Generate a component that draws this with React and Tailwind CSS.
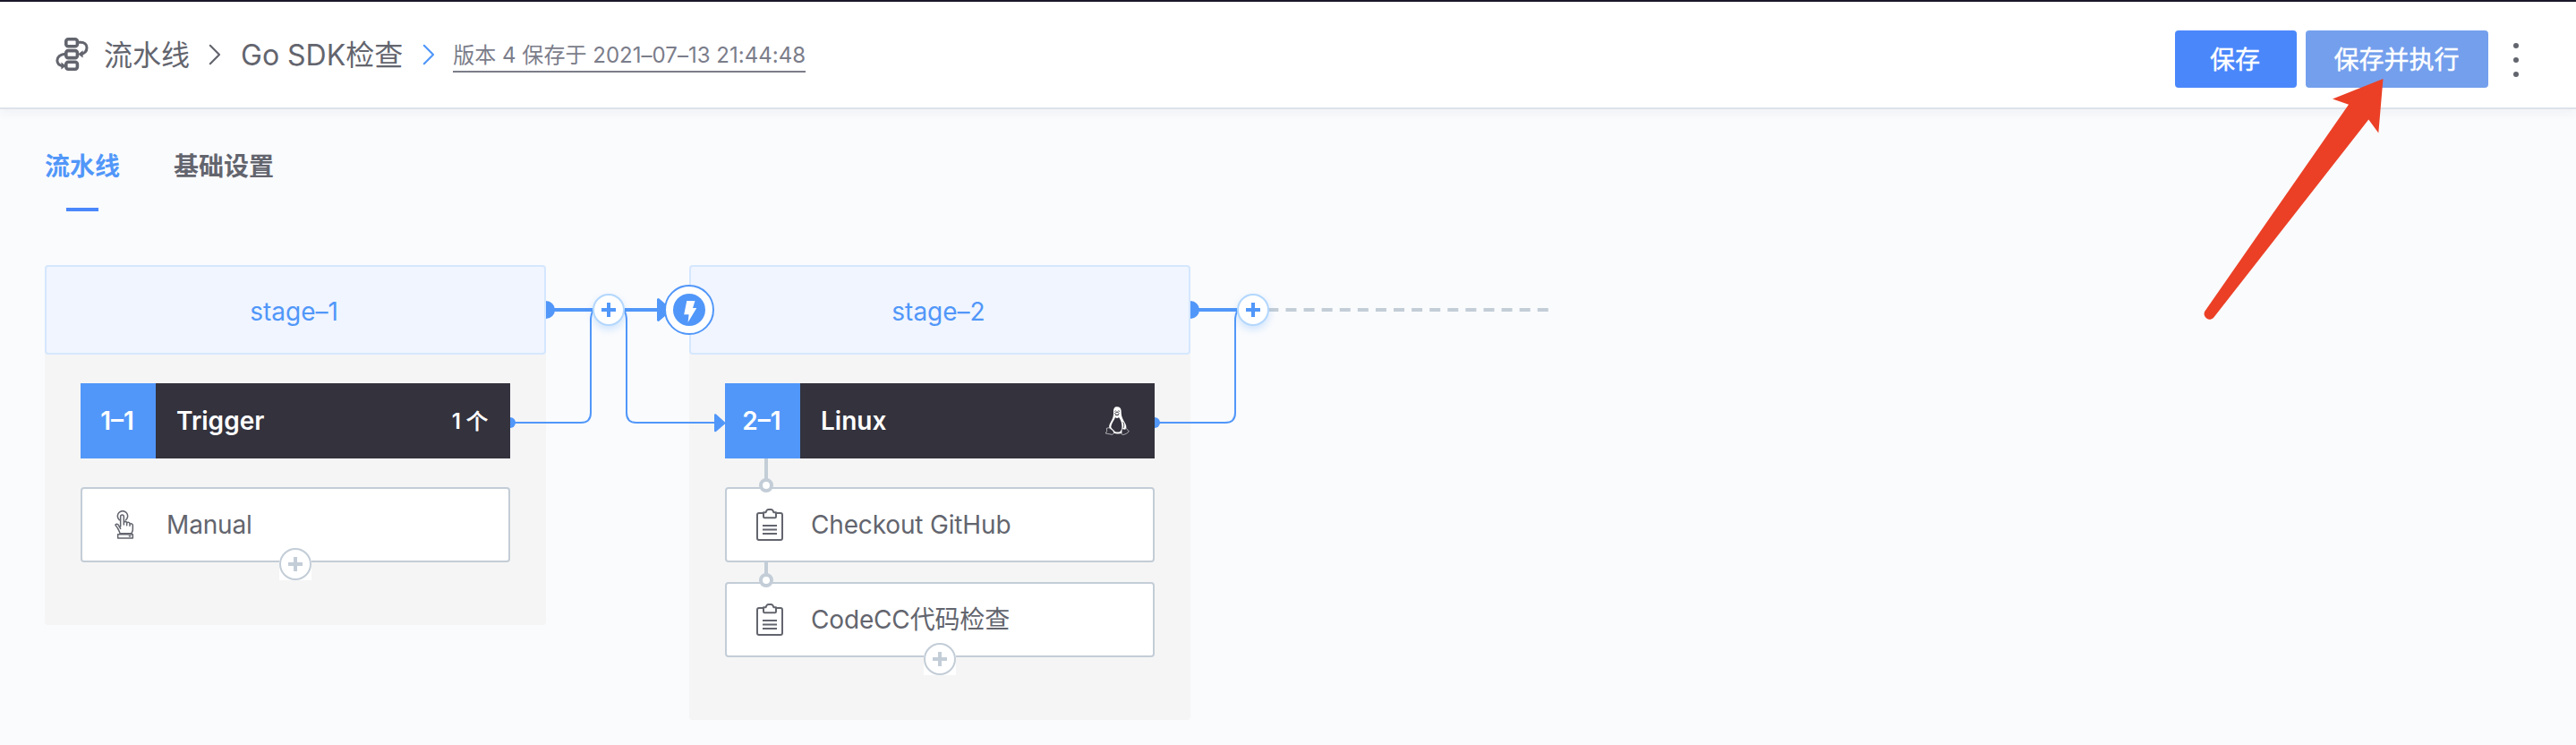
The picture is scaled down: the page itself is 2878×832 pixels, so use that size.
import React from "react";

function PipelineIcon() {
  return (
    <svg className="h-[38px] w-[38px]" viewBox="0 0 38 38" fill="none" stroke="#63656e" strokeWidth="3.6">
      <rect x="11.8" y="1.8" width="12.6" height="8" rx="2.4" />
      <rect x="11.8" y="14.6" width="12.6" height="8" rx="2.4" />
      <rect x="11.8" y="27.2" width="12.6" height="8" rx="2.4" />
      <path strokeWidth="3" d="M25.5 5.2h2.6c4.2 0 6.9 2.5 6.9 6 0 3.8-2.7 6.6-7.4 7.4M10.5 18.2c-5.4.6-8.6 3.6-8.6 7.4 0 3.6 2.5 5.6 6.6 6.4" />
      <path fill="#63656e" stroke="none" d="M30.6 14.2v8.4l-5.4-4zM6.4 27.4v8.2l5.4-4z" />
    </svg>
  );
}

function Chevron({ className }) {
  return (
    <svg className={`h-6 w-3.5 ${className}`} viewBox="0 0 14 24" fill="none" stroke="currentColor" strokeWidth="2.2">
      <path strokeLinecap="round" strokeLinejoin="round" d="M1.8 1.8 12 12 1.8 22.2" />
    </svg>
  );
}

function HandIcon() {
  return (
    <svg className="h-8 w-[22px]" viewBox="0 0 66 96" fill="none" stroke="#63656e" strokeWidth="4.6" strokeLinejoin="round" strokeLinecap="round">
      <path d="M16 32A17 17 0 1 1 38 32" />
      <path d="M20 54V21c0-8 11-8 11 0v27M31 40c4-5 10-3 10 2v8M41 42c4-4 10-2 10 3v7M51 46c4-3 10-1 10 4v14c0 6-3 9-4 13H18c-1-6-5-12-8-18L3 49c0-4 8-5 10 0l7 12" />
      <path d="M11 80h50v13H11zM49 86.500h4" />
    </svg>
  );
}

function ClipboardIcon() {
  return (
    <svg className="ml-0.5 h-9 w-[30px]" viewBox="0 0 30 36" fill="none" stroke="#63656e" strokeWidth="2" strokeLinejoin="round">
      <path d="M7 5H3a2 2 0 0 0-2 2v26a2 2 0 0 0 2 2h24a2 2 0 0 0 2-2V7a2 2 0 0 0-2-2h-4" />
      <path d="M8 4.200h2.600c.6-2 1.800-3.200 3-3.200h2.800c1.200 0 2.400 1.200 3 3.200H22V9a1.300 1.300 0 0 1-1.300 1.300H9.300A1.300 1.300 0 0 1 8 9z" />
      <path d="M7 19h16M7 23.500h16M7 28h16" />
    </svg>
  );
}

function LinuxIcon() {
  return (
    <svg className="h-8 w-7" viewBox="0 0 84 96" fill="none">
      <path
        fill="#fff"
        fillRule="evenodd"
        d="M42 1c9 0 14 6 14 14 0 14 2 21 8 32 6 10 10 16 9 24-1 5-7 6-11 5l-4 4 1 9c-9 3-20 3-28 0-2-8-8-13-15-17-2-8 2-14 5-20 6-12 9-18 9-28V17C30 7 33 1 42 1zM36 36c-3 10-13 20-14 33 0 4 9 9 13 15 7 3 14 2 18-1 5-6 6-12 5-21-1-13-6-20-10-26-4 4-8 4-12 0z"
      />
      <path stroke="#33323d" strokeWidth="2.500" d="M34 17l3-3 3 3M44 17l3-3 4 3M34 23c5-5 12-5 15 0-3 6-12 7-15 0zM36 27c4 3 9 2 12 0M62 52c4 7 4 13 1 20" />
      <path
        fill="#33323d"
        stroke="#fff"
        strokeOpacity=".75"
        strokeWidth="2.400"
        strokeLinejoin="round"
        d="M15 71l-8 2 1 9-4 8 22 4 6-5-3-8zM59 72c-2 7-1 14-2 20l5 3 11-4 9-7-9-11c-4 5-10 4-14-1z"
      />
    </svg>
  );
}

function Plus({ className }) {
  return (
    <svg className={`size-4 ${className}`} viewBox="0 0 16 16" fill="currentColor">
      <path d="M6 0h4v6h6v4h-6v6H6v-6H0V6h6z" />
    </svg>
  );
}

function Connector({ last }) {
  return (
    <>
      <svg className="absolute top-0 left-[520px] z-10 h-[200px] w-[660px]" viewBox="0 0 660 200" fill="none">
        <g fill="#5197f9">
          <path d="M40 40a10 10 0 0 1 0 20z" />
          <path d="M0 170a6 6 0 0 1 0 12z" />
          <path d="M48 48h44v4H48z" />
        </g>
        <path stroke="#5197f9" strokeWidth="2" d="M0 176H79Q90 176 90 165V62Q90 55 93 50" />
        {last ? (
          <path stroke="#c3cdd7" strokeWidth="4" strokeDasharray="12 8.090" d="M106.300 50H440" />
        ) : (
          <>
            <path fill="#5197f9" d="M128 48h36v-9.500a1.500 1.500 0 0 1 2.500-1L181 50l-14.500 12.500a1.500 1.500 0 0 1-2.500-1V52h-36z" />
            <path stroke="#5197f9" strokeWidth="2" d="M127 50Q130 55 130 62V165Q130 176 141 176H230" />
            <path fill="#5197f9" d="M228 167.500a1.200 1.200 0 0 1 2-1L241 176.500l-11 9.500a1.200 1.200 0 0 1-2-1z" />
          </>
        )}
      </svg>
      <button className="absolute top-8 left-[612px] z-20 flex size-9 items-center justify-center rounded-full border-2 border-[#b3d7fd] bg-white shadow-[0_4px_8px_rgba(60,150,255,0.22)]">
        <Plus className="text-[#5197f9]" />
      </button>
    </>
  );
}

function AddButton() {
  return (
    <span className="absolute -bottom-[22px] left-1/2 -ml-[18px] bg-white">
      <button className="flex size-9 items-center justify-center rounded-full border-2 border-[#c3cdd7]">
        <Plus className="text-[#c3cdd7]" />
      </button>
    </span>
  );
}

function Link({ first }) {
  return (
    <span className={`absolute left-9 flex w-4 flex-col items-center ${first ? "-top-[34px]" : "-top-6"}`}>
      <span className={`w-1 bg-[#c3cdd7] ${first ? "h-[23px]" : "h-[13px]"}`} />
      <span className="-mt-px size-4 rounded-full border-4 border-[#c3cdd7] bg-white" />
    </span>
  );
}

function Element({ icon, name, link, first, last }) {
  return (
    <li className="relative flex h-[84px] items-center rounded border-2 border-[#c3cdd7] bg-white text-[28px] leading-9 text-[#63656e]">
      {link && <Link first={first} />}
      <span className="flex w-[94px] items-center justify-center">{icon}</span>
      <span className="tracking-[-0.16px]">{name}</span>
      {last && <AddButton />}
    </li>
  );
}

function Stage({ name, job, elements, last, start }) {
  const count = elements.length;
  return (
    <section className="relative w-[560px] rounded bg-[#f5f5f5] pb-[70px]">
      <h2 className="flex h-[100px] items-center justify-center rounded border-2 border-[#d5e7fe] bg-[#f0f5ff] pt-[3px] pr-[3px] text-[28px] leading-9 text-[#5197f9]">
        {name}
      </h2>
      {!start && (
        <span className="absolute top-[22px] -left-7 z-20 flex size-14 items-center justify-center rounded-full border-2 border-[#5197f9] bg-white">
          <svg className="size-9" viewBox="0 0 36 36">
            <circle cx="18" cy="18" r="18" fill="#5197f9" />
            <path fill="#fff" d="M15.300 8h9.200l-2.500 8h4.300L16.600 32l1-8.700h-5.400z" />
          </svg>
        </span>
      )}
      <div className="flex flex-col gap-8 px-10 pt-8">
        <div className="flex h-[84px] items-center bg-[#33323d] text-[28px] leading-9 font-semibold text-white">
          <span className="flex size-[84px] items-center justify-center bg-[#5197f9] pr-0.5">{job.id}</span>
          <span className="flex-1 pl-[23px]">{job.name}</span>
          {job.extra}
        </div>
        <ul className="flex flex-col gap-[22px]">
          {elements.map((el, i) => (
            <Element key={el.name} {...el} link={!start} first={i === 0} last={i === count - 1} />
          ))}
        </ul>
      </div>
      <Connector last={last} />
    </section>
  );
}

export default function App() {
  return (
    <div className="relative min-h-[832px] w-full overflow-hidden bg-[#fafbfd] font-['Inter','Noto_Sans_CJK_SC',sans-serif]">
      <header className="flex h-[122px] items-center justify-between border-t-2 border-b-2 border-t-[#1a1729] border-b-[#dde3e9] bg-white pr-[58px] pl-[62px] shadow-[0_4px_10px_rgba(51,60,72,0.05)]">
        <nav className="flex items-center text-[32px] leading-10 text-[#63656e]">
          <PipelineIcon />
          <span className="ml-4 pt-0.5">流水线</span>
          <Chevron className="ml-[21px] text-[#63656e]" />
          <span className="ml-[22px] pt-0.5">Go SDK检查</span>
          <Chevron className="ml-[22px] text-[#5197f9]" />
          <span className="mt-px ml-5 h-[38px] border-b-2 border-[#7b7d8a] pt-px text-2xl leading-9 tracking-[0.03px] whitespace-nowrap text-[#7b7d8a]">
            版本 4 保存于 2021–07–13 21:44:48
          </span>
        </nav>
        <div className="flex items-center pt-2.5 text-[28px] leading-9 text-white [-webkit-text-stroke:0.4px]">
          <button className="h-16 w-[136px] rounded bg-[#4a87fb] pt-0.5 pr-0.5">保存</button>
          <button className="ml-2.5 h-16 w-[204px] rounded bg-[#749fed] pt-0.5 pr-px">保存并执行</button>
          <div className="ml-7 flex w-1.5 flex-col gap-2.5 pr-3 pt-0.5">
            <span className="size-1.5 rounded-full bg-[#63656e]" />
            <span className="size-1.5 rounded-full bg-[#63656e]" />
            <span className="size-1.5 rounded-full bg-[#63656e]" />
          </div>
        </div>
      </header>

      <main className="px-[50px] pt-[46px]">
        <div className="flex gap-[60px] text-[28px] leading-9 font-bold">
          <div className="flex flex-col items-center gap-7 text-[#5197f9]">
            流水线
            <span className="h-1 w-9 bg-[#4a87fb]" />
          </div>
          <div className="text-[#63656e]">基础设置</div>
        </div>

        <div className="mt-[60px] flex items-start gap-[160px]">
          <Stage
            start
            name="stage–1"
            job={{
              id: "1–1",
              name: "Trigger",
              extra: (
                <span className="pt-0.5 pr-[25px] text-2xl">
                  1 <span className="font-normal [-webkit-text-stroke:0.8px]">个</span>
                </span>
              ),
            }}
            elements={[{ name: "Manual", icon: <HandIcon /> }]}
          />
          <Stage
            last
            name="stage–2"
            job={{ id: "2–1", name: "Linux", extra: <span className="pr-7"><LinuxIcon /></span> }}
            elements={[
              { name: "Checkout GitHub", icon: <ClipboardIcon /> },
              { name: "CodeCC代码检查", icon: <ClipboardIcon /> },
            ]}
          />
        </div>
      </main>

      <svg className="absolute top-20 left-[2455px] z-30 h-[280px] w-[220px]" viewBox="2455 80 220 280">
        <path
          fill="#eb4026"
          d="M2662.500 88 2606 110.500l18 6.200L2463.400 347.500a5.800 5.800 0 0 0 10.500 6.200L2646.300 133.500l11 15z"
        />
      </svg>
    </div>
  );
}
